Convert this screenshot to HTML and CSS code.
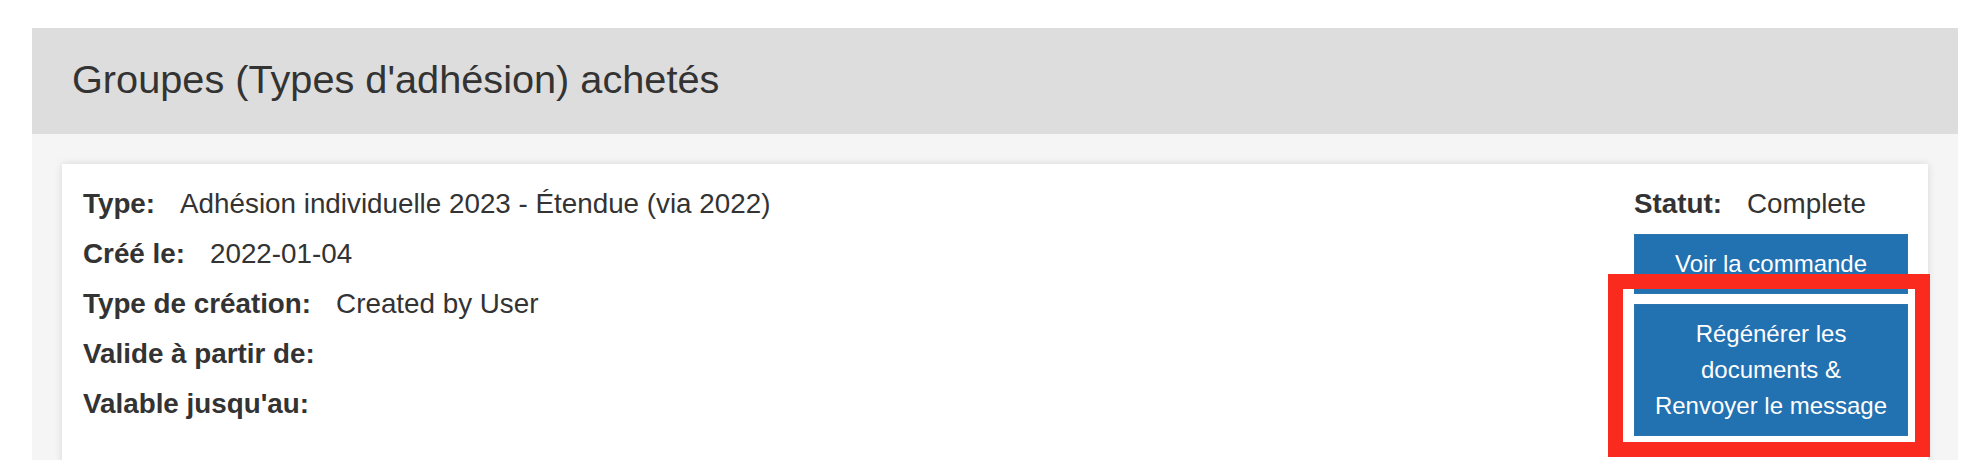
FILE: index.html
```html
<!DOCTYPE html>
<html lang="fr">
<head>
<meta charset="utf-8">
<title>Groupes (Types d'adhésion) achetés</title>
<link rel="stylesheet" href="styles.css">
</head>
<body>
<div class="panel">
  <div class="panel-heading">
    <h2 class="panel-title">Groupes (Types d'adhésion) achetés</h2>
  </div>
  <div class="panel-body">
    <div class="card">
      <div class="details">
        <div class="row"><span class="label">Type:</span><span class="value">Adhésion individuelle 2023 - Étendue (via 2022)</span></div>
        <div class="row"><span class="label">Créé le:</span><span class="value">2022-01-04</span></div>
        <div class="row"><span class="label">Type de création:</span><span class="value">Created by User</span></div>
        <div class="row"><span class="label">Valide à partir de:</span></div>
        <div class="row"><span class="label">Valable jusqu'au:</span></div>
      </div>
      <div class="actions">
        <div class="row"><span class="label">Statut:</span><span class="value">Complete</span></div>
        <a class="btn btn-first" href="#">Voir la commande</a>
        <div class="highlight-wrap">
          <a class="btn" href="#">Régénérer les<br>documents &amp;<br>Renvoyer le message</a>
          <div class="highlight"></div>
        </div>
      </div>
    </div>
  </div>
</div>
</body>
</html>
```

FILE: styles.css
```css
html, body {
  margin: 0;
  padding: 0;
  background: #ffffff;
  height: 100%;
  overflow: hidden;
}

body {
  font-family: "Liberation Sans", Arial, Helvetica, sans-serif;
  color: #333333;
}

.panel {
  margin: 28px 20px 0 32px;
}

.panel-heading {
  background: #dddddd;
  height: 106px;
  display: flex;
  align-items: center;
  padding-left: 40px;
}

.panel-title {
  margin: 0;
  font-size: 39.7px;
  font-weight: normal;
  color: #333333;
  line-height: 1;
  padding-bottom: 2px;
}

.panel-body {
  background: #f5f5f5;
  padding: 30px 30px 0 30px;
  height: 400px;
}

.card {
  background: #ffffff;
  box-shadow: 0 0 8px rgba(0, 0, 0, 0.12);
  display: flex;
  justify-content: space-between;
  padding: 14.5px 20px 40px 21px;
  font-size: 27.8px;
}

.row {
  line-height: 50px;
  white-space: nowrap;
}

.label {
  font-weight: bold;
  margin-right: 25px;
}

.actions {
  width: 274px;
  display: flex;
  flex-direction: column;
}

.btn {
  display: block;
  box-sizing: border-box;
  width: 274px;
  background: #2271b1;
  border: 1px solid #2a75b0;
  color: #ffffff;
  text-decoration: none;
  text-align: center;
  font-size: 24px;
  line-height: 36px;
  padding: 11px 0;
}

.btn-first {
  margin-top: 5.5px;
}

.highlight-wrap {
  position: relative;
  margin-top: 10px;
}

.highlight {
  position: absolute;
  top: -30px;
  left: -26px;
  right: -22px;
  bottom: -21px;
  border: 15px solid #fb2a1f;
  pointer-events: none;
}
```
